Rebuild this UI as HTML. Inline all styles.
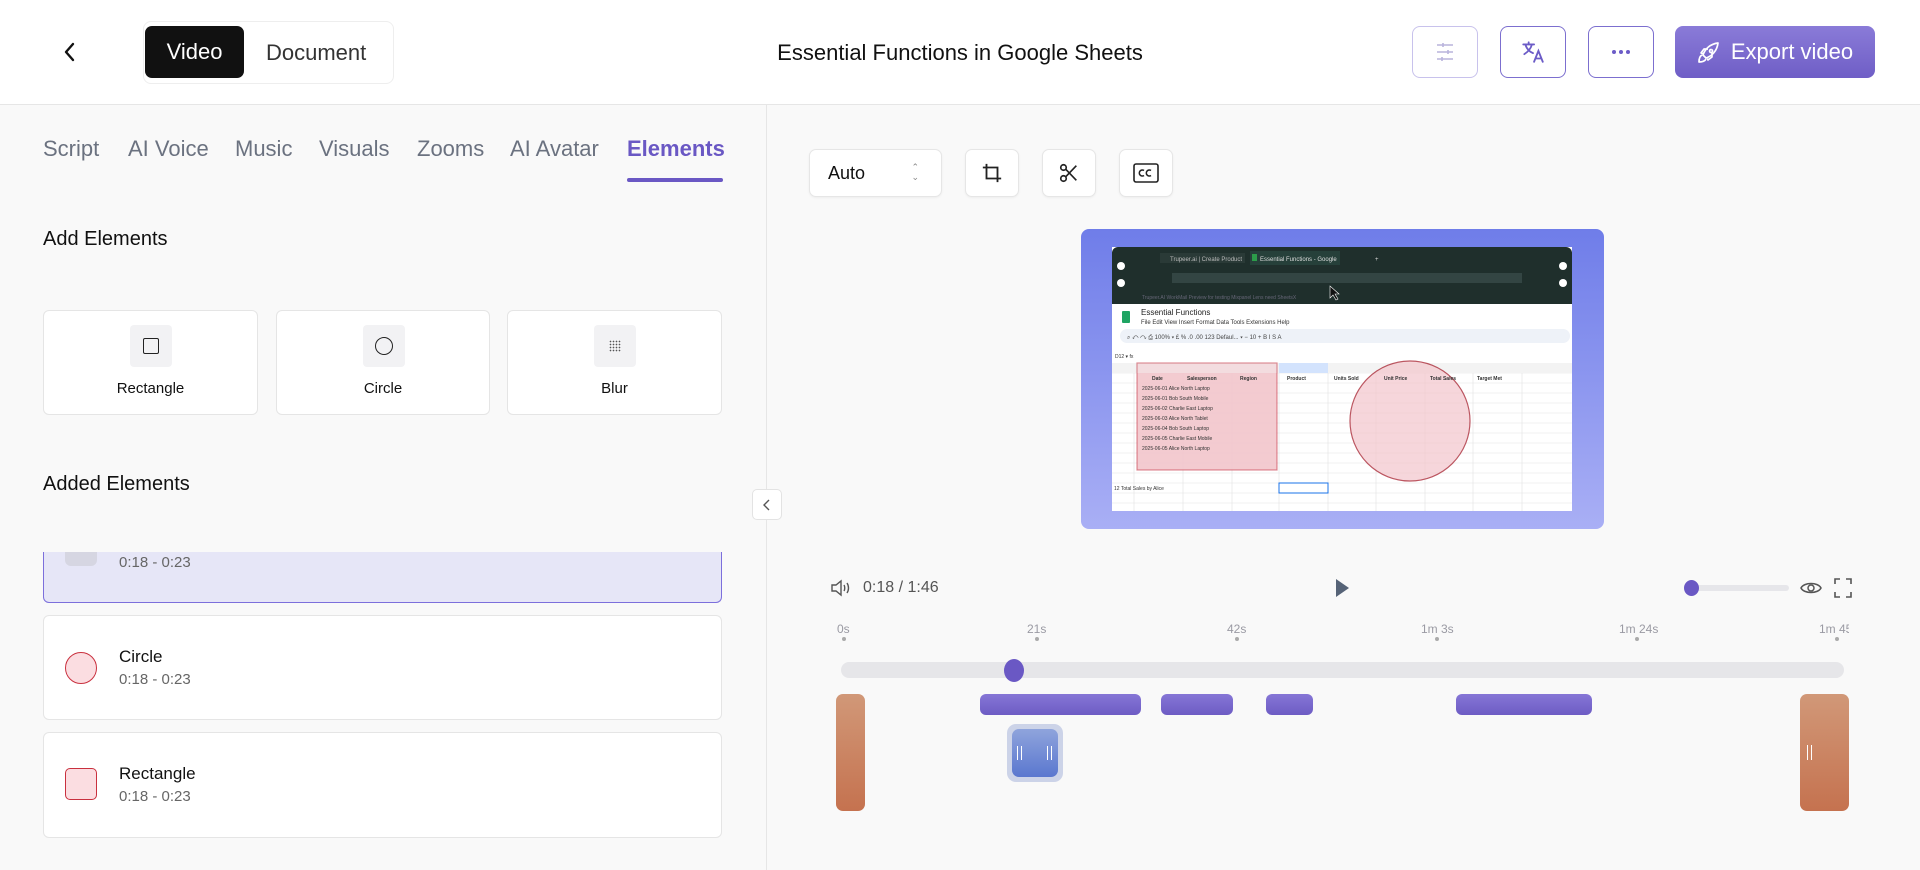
<!DOCTYPE html>
<html><head><meta charset="utf-8"><style>
*{box-sizing:border-box;margin:0;padding:0}
body{width:1920px;height:870px;overflow:hidden;background:#f9f9f9;font-family:"Liberation Sans",sans-serif;position:relative;color:#111}
.a{position:absolute}
.hdr{left:0;top:0;width:1920px;height:105px;background:#fff;border-bottom:1px solid #e6e6e6}
.btn{border:1.5px solid #7c6fcf;border-radius:8px;background:#fff;width:66px;height:52px;top:26px;display:flex;align-items:center;justify-content:center}
.tab{top:136px;font-size:22px;color:#6b7280}
.card{background:#fff;border:1px solid #e5e5e5;border-radius:6px}
.ib{width:42px;height:42px;background:#f2f2f4;border-radius:4px;display:flex;align-items:center;justify-content:center}
.tool{background:#fff;border:1px solid #e6e6e6;border-radius:7px;top:149px;height:48px;width:54px;display:flex;align-items:center;justify-content:center;box-shadow:0 1px 2px rgba(0,0,0,.05)}
.lbl{top:622px;font-size:12px;color:#9a9aa3}
.dot{top:637px;width:4px;height:4px;border-radius:2px;background:#aaa}
.pb{top:694px;height:21px;border-radius:6px;background:linear-gradient(#8676d6,#6d5cc4)}
.ob{top:694px;height:117px;border-radius:7px;background:linear-gradient(#d19878,#c5724f)}
</style></head><body>
<div class="a hdr"></div>
<svg class="a" style="left:60px;top:41px" width="20" height="22" viewBox="0 0 20 22"><path d="M13 3 L6 11 L13 19" stroke="#111" stroke-width="2.4" fill="none" stroke-linecap="round" stroke-linejoin="round"/></svg>
<div class="a" style="left:143px;top:21px;width:251px;height:63px;border:1px solid #eee;border-radius:8px;background:#fff"></div>
<div class="a" style="left:145px;top:26px;width:99px;height:52px;background:#111;border-radius:7px;color:#fff;font-size:22px;display:flex;align-items:center;justify-content:center">Video</div>
<div class="a" style="left:266px;top:40px;font-size:22px;color:#333">Document</div>
<div class="a" style="left:700px;width:520px;top:40px;text-align:center;font-size:22px">Essential Functions in Google Sheets</div>
<div class="a btn" style="left:1412px;border-color:#c8c2ec"><svg width="24" height="24" viewBox="0 0 24 24" stroke="#b8b3dc" stroke-width="1.6" fill="none"><path d="M4 5h16M4 12h16M4 19h16M10 3v4M15 10v4M9 17v4"/></svg></div>
<div class="a btn" style="left:1500px"><svg width="26" height="26" viewBox="0 0 24 24" stroke="#6c5cc7" stroke-width="1.7" fill="none" stroke-linecap="round"><path d="M3 5h10M8 3v2M5 5c1 4 4 7 7 8M11 5c-1 4-4 7-7 9M13 21l4-10 4 10M14.5 18h5"/></svg></div>
<div class="a btn" style="left:1588px"><svg width="20" height="6"><circle cx="3" cy="3" r="2" fill="#6c5cc7"/><circle cx="10" cy="3" r="2" fill="#6c5cc7"/><circle cx="17" cy="3" r="2" fill="#6c5cc7"/></svg></div>
<div class="a" style="left:1675px;top:26px;width:200px;height:52px;border-radius:8px;background:linear-gradient(#8a7bd8,#6f5ec6);color:#fff;font-size:22px;display:flex;align-items:center;justify-content:center;gap:10px"><svg width="24" height="24" viewBox="0 0 24 24" stroke="#fff" stroke-width="1.7" fill="none" stroke-linejoin="round"><path d="M5 15c-2 1-3 4-3 7 3 0 6-1 7-3M9 18l-3-3c2-6 7-11 15-12-1 8-6 13-12 15zM14 9.5a1.5 1.5 0 1 0 .1 0M7 14l-3-1 3-4h4M10 17l1 3 4-3v-4"/></svg>Export video</div>

<div class="a" style="left:766px;top:105px;width:1px;height:765px;background:#e6e6e6"></div>
<div class="a tab" style="left:43px">Script</div>
<div class="a tab" style="left:128px">AI Voice</div>
<div class="a tab" style="left:235px">Music</div>
<div class="a tab" style="left:319px">Visuals</div>
<div class="a tab" style="left:417px">Zooms</div>
<div class="a tab" style="left:510px">AI Avatar</div>
<div class="a tab" style="left:627px;color:#6a58c4;font-weight:bold">Elements</div>
<div class="a" style="left:627px;top:178px;width:96px;height:4px;border-radius:2px;background:#6a58c4"></div>
<div class="a" style="left:43px;top:228px;font-size:20px">Add Elements</div>
<div class="a card" style="left:43px;top:310px;width:215px;height:105px"><div class="a ib" style="left:86px;top:14px"><div style="width:16px;height:16px;border:1.6px solid #222;border-radius:2px"></div></div><div class="a" style="width:100%;top:69px;text-align:center;font-size:15px">Rectangle</div></div>
<div class="a card" style="left:276px;top:310px;width:214px;height:105px"><div class="a ib" style="left:86px;top:14px"><div style="width:18px;height:18px;border:1.6px solid #222;border-radius:50%"></div></div><div class="a" style="width:100%;top:69px;text-align:center;font-size:15px">Circle</div></div>
<div class="a card" style="left:507px;top:310px;width:215px;height:105px"><div class="a ib" style="left:86px;top:14px"><div style="width:12px;height:12px;background:radial-gradient(#555 35%,transparent 40%) 0 0/3px 3px"></div></div><div class="a" style="width:100%;top:69px;text-align:center;font-size:15px">Blur</div></div>
<div class="a" style="left:43px;top:473px;font-size:20px">Added Elements</div>
<div class="a" style="left:43px;top:552px;width:679px;height:51px;background:#e6e6f7;border:1.5px solid #7c6fdc;border-top:none;border-radius:0 0 6px 6px"></div>
<div class="a" style="left:65px;top:552px;width:32px;height:14px;background:#d6d6e2;border-radius:0 0 6px 6px"></div>
<div class="a" style="left:119px;top:554px;font-size:15px;color:#666">0:18 - 0:23</div>
<div class="a card" style="left:43px;top:615px;width:679px;height:105px"></div>
<div class="a" style="left:65px;top:652px;width:32px;height:32px;border-radius:50%;background:#fbdde1;border:1.5px solid #c9303e"></div>
<div class="a" style="left:119px;top:647px;font-size:17px">Circle</div>
<div class="a" style="left:119px;top:671px;font-size:15px;color:#666">0:18 - 0:23</div>
<div class="a card" style="left:43px;top:732px;width:679px;height:106px"></div>
<div class="a" style="left:65px;top:768px;width:32px;height:32px;border-radius:5px;background:#fbdde1;border:1.5px solid #c9303e"></div>
<div class="a" style="left:119px;top:764px;font-size:17px">Rectangle</div>
<div class="a" style="left:119px;top:788px;font-size:15px;color:#666">0:18 - 0:23</div>
<div class="a" style="left:752px;top:489px;width:30px;height:31px;background:#fff;border:1px solid #e3e3e3;border-radius:5px;display:flex;align-items:center;justify-content:center"><svg width="10" height="12"><path d="M7 1L2 6l5 5" stroke="#555" stroke-width="1.4" fill="none"/></svg></div>

<div class="a tool" style="left:809px;width:133px;justify-content:flex-start;padding-left:18px;font-size:18px">Auto<span style="position:absolute;right:22px;top:12px;font-size:9px;line-height:10px;color:#888">⌃<br>⌄</span></div>
<div class="a tool" style="left:965px"><svg width="22" height="22" viewBox="0 0 24 24" stroke="#222" stroke-width="2" fill="none"><path d="M6 2v16h16M2 6h16v16"/></svg></div>
<div class="a tool" style="left:1042px"><svg width="22" height="22" viewBox="0 0 24 24" stroke="#222" stroke-width="1.8" fill="none"><circle cx="6" cy="6" r="3"/><circle cx="6" cy="18" r="3"/><path d="M8.5 8L20 20M8.5 16L20 4"/></svg></div>
<div class="a tool" style="left:1119px"><svg width="26" height="20" viewBox="0 0 26 20" stroke="#222" stroke-width="1.6" fill="none"><rect x="1" y="1" width="24" height="18" rx="2"/><path d="M11 7.5a3 3 0 1 0 0 5M18 7.5a3 3 0 1 0 0 5"/></svg></div>

<div class="a" style="left:1081px;top:229px;width:523px;height:300px;border-radius:8px;background:linear-gradient(#6f7de9,#a9aff5)"></div>
<svg class="a" style="left:1112px;top:247px" width="460" height="264" viewBox="0 0 460 264" font-family="Liberation Sans" font-size="6">
<rect width="460" height="264" fill="#fff"/>
<rect width="460" height="57" fill="#1f2f2c" rx="6"/>
<rect y="50" width="460" height="7" fill="#1f2f2c"/>
<rect x="48" y="6" width="85" height="10" fill="#2a3a37"/><text x="58" y="14" fill="#bbb">Trupeer.ai | Create Product</text>
<rect x="138" y="4" width="90" height="14" fill="#26403a"/><rect x="140" y="7" width="5" height="7" fill="#2c9c4a"/><text x="148" y="14" fill="#ddd">Essential Functions - Google</text><text x="263" y="14" fill="#ddd">+</text>
<rect x="60" y="26" width="350" height="10" fill="#334543"/>
<text x="30" y="52" fill="#667" font-size="5">Trupeer.AI   WorkMail   Preview for testing   Mixpanel   Lens need   SheetsX</text>
<circle cx="9" cy="19" r="4" fill="#fff"/><circle cx="9" cy="36" r="4" fill="#fff"/><circle cx="451" cy="19" r="4" fill="#fff"/><circle cx="451" cy="36" r="4" fill="#fff"/>
<path d="M218 39l0 12 3-3 3 5 2-1-3-5 4 0z" fill="#111" stroke="#fff" stroke-width=".6"/>
<rect x="10" y="64" width="8" height="12" fill="#1fa463" rx="1"/>
<text x="29" y="68" font-size="8" fill="#222">Essential Functions</text>
<text x="29" y="77" fill="#333">File  Edit  View  Insert  Format  Data  Tools  Extensions  Help</text>
<rect x="8" y="82" width="450" height="14" rx="7" fill="#eef2f8"/>
<text x="15" y="92" fill="#444">⌕  ↶  ↷  ⎙  100% ▾   £   %  .0  .00  123   Defaul... ▾  −  10  +   B  I  S  A</text>
<text x="3" y="111" fill="#333" font-size="5">D12   ▾  fx</text>
<g stroke="#e2e2e2" stroke-width=".6">
<path d="M0 126H460M0 136H460M0 146H460M0 156H460M0 166H460M0 176H460M0 186H460M0 196H460M0 206H460M0 216H460M0 226H460M0 236H460M0 246H460M0 256H460"/>
<path d="M22 116V264M71 116V264M120 116V264M167 116V264M216 116V264M264 116V264M313 116V264M361 116V264M410 116V264"/>
</g>
<rect x="0" y="116" width="460" height="10" fill="#f3f3f3"/>
<rect x="167" y="116" width="49" height="10" fill="#d3e3fd"/>
<rect x="25" y="126" width="140" height="97" fill="#f3c6cc" opacity=".8"/>
<rect x="25" y="116" width="140" height="107" fill="#f3c6cc" opacity=".5" stroke="#c02233" stroke-width="1.2"/>
<circle cx="298" cy="174" r="60" fill="#f3c6cc" opacity=".7" stroke="#a0101f" stroke-width="1.2"/>
<g font-size="5" fill="#333"><text x="40" y="133" font-weight="bold">Date</text><text x="75" y="133" font-weight="bold">Salesperson</text><text x="128" y="133" font-weight="bold">Region</text><text x="175" y="133" font-weight="bold">Product</text><text x="222" y="133" font-weight="bold">Units Sold</text><text x="272" y="133" font-weight="bold">Unit Price</text><text x="318" y="133" font-weight="bold">Total Sales</text><text x="365" y="133" font-weight="bold">Target Met</text>
<text x="30" y="143">2025-06-01  Alice          North    Laptop</text><text x="30" y="153">2025-06-01  Bob            South    Mobile</text><text x="30" y="163">2025-06-02  Charlie        East      Laptop</text><text x="30" y="173">2025-06-03  Alice          North    Tablet</text><text x="30" y="183">2025-06-04  Bob            South    Laptop</text><text x="30" y="193">2025-06-05  Charlie        East      Mobile</text><text x="30" y="203">2025-06-05  Alice          North    Laptop</text>
<text x="2" y="243">12  Total Sales by Alice</text></g>
<rect x="167" y="236" width="49" height="10" fill="none" stroke="#1a73e8"/>
</svg>

<svg class="a" style="left:830px;top:578px" width="22" height="20" viewBox="0 0 22 20" stroke="#555" stroke-width="1.4" fill="none"><path d="M2 7h4l5-4v14l-5-4H2zM14 7c1 1.5 1 4.5 0 6M17 5c2 3 2 7 0 10"/></svg>
<div class="a" style="left:863px;top:579px;font-size:16px;color:#555">0:18 / 1:46</div>
<svg class="a" style="left:1334px;top:578px" width="16" height="20"><path d="M2 1L15 10 2 19z" fill="#566377"/></svg>
<div class="a" style="left:1694px;top:585px;width:95px;height:6px;border-radius:3px;background:#e6e6ea"></div>
<div class="a" style="left:1684px;top:580px;width:15px;height:16px;border-radius:50%;background:#6a58c4"></div>
<svg class="a" style="left:1800px;top:578px" width="22" height="20" viewBox="0 0 22 20" stroke="#555" stroke-width="1.5" fill="none"><path d="M1 10c3-6 17-6 20 0-3 6-17 6-20 0z"/><circle cx="11" cy="10" r="3"/></svg>
<svg class="a" style="left:1834px;top:578px" width="18" height="20" viewBox="0 0 18 20" stroke="#555" stroke-width="1.6" fill="none"><path d="M1 6V1h5M12 1h5v5M17 14v5h-5M6 19H1v-5"/></svg>
<div class="a lbl" style="left:837px">0s</div><div class="a lbl" style="left:1027px">21s</div><div class="a lbl" style="left:1227px">42s</div><div class="a lbl" style="left:1421px">1m 3s</div><div class="a lbl" style="left:1619px">1m 24s</div><div class="a lbl" style="left:1819px;width:30px;overflow:hidden;white-space:nowrap">1m 45s</div>
<div class="a dot" style="left:842px"></div><div class="a dot" style="left:1035px"></div><div class="a dot" style="left:1235px"></div><div class="a dot" style="left:1435px"></div><div class="a dot" style="left:1635px"></div><div class="a dot" style="left:1835px"></div>
<div class="a" style="left:841px;top:662px;width:1003px;height:16px;border-radius:8px;background:#e6e6e9"></div>
<div class="a" style="left:1004px;top:659px;width:20px;height:23px;border-radius:50%;background:#6a58c4"></div>
<div class="a pb" style="left:980px;width:161px"></div>
<div class="a pb" style="left:1161px;width:72px"></div>
<div class="a pb" style="left:1266px;width:47px"></div>
<div class="a pb" style="left:1456px;width:136px"></div>
<div class="a ob" style="left:836px;width:29px"></div>
<div class="a ob" style="left:1800px;width:49px"></div>
<div class="a" style="left:1807px;top:745px;width:5px;height:15px;border-left:1.5px solid #fff;border-right:1.5px solid #fff"></div>
<div class="a" style="left:1007px;top:724px;width:56px;height:58px;border-radius:9px;background:#ccd3e8"></div>
<div class="a" style="left:1012px;top:729px;width:46px;height:48px;border-radius:7px;background:linear-gradient(#8fa4dc,#5a77cf)"></div>
<div class="a" style="left:1017px;top:746px;width:5px;height:14px;border-left:1.5px solid #fff;border-right:1.5px solid #fff"></div>
<div class="a" style="left:1047px;top:746px;width:5px;height:14px;border-left:1.5px solid #fff;border-right:1.5px solid #fff"></div>
</body></html>
